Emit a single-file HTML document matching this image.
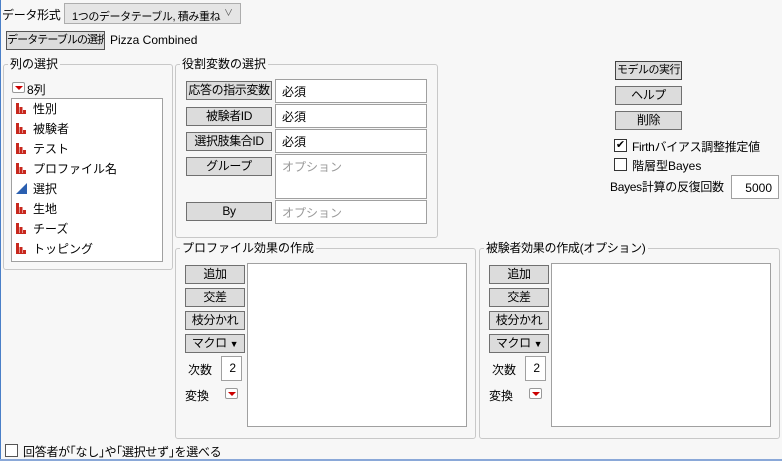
<!DOCTYPE html>
<html><head><meta charset="utf-8"><style>
*{box-sizing:border-box;margin:0;padding:0}
body{width:782px;height:461px;background:#f7f7f7;font-family:"Liberation Sans","Noto Sans CJK JP",sans-serif;font-size:12px;color:#000;position:relative;overflow:hidden}
.a{position:absolute;white-space:nowrap}
.btn{position:absolute;background:#dcdcdc;border:1px solid #707070;text-align:center;font-size:12px;line-height:16px;white-space:nowrap;overflow:hidden;letter-spacing:-0.4px}
.grp{position:absolute;border:1px solid #c8c8c8;border-radius:3px}
.gt{position:absolute;background:#f7f7f7;padding:0 2px;font-size:12px;line-height:14px;white-space:nowrap}
.box{position:absolute;background:#fff;border:1px solid #a0a0a0}
.tf{position:absolute;background:#fff;border:1px solid #a0a0a0;padding:5px 0 0 6px;font-size:12px;line-height:14px}
.gray{color:#999}
.it{position:absolute;font-size:12px;line-height:14px;white-space:nowrap}
.cb{position:absolute;width:13px;height:13px;background:#fff;border:1px solid #333}
.tri{position:absolute;width:13px;height:11px;border:1px solid #999;border-radius:2px;background:#fff}
.tri:after{content:"";position:absolute;left:2px;top:3px;border-left:4px solid transparent;border-right:4px solid transparent;border-top:4px solid #c00}
</style></head><body>
<div class="a" style="left:0;top:0;width:1px;height:461px;background:#4a7fc8"></div>
<div class="a" style="left:0;top:459px;width:782px;height:2px;background:#8aa8d8"></div>

<div class="a" style="left:2px;top:6px;font-size:12px;letter-spacing:-0.3px">データ形式</div>
<div class="a" style="left:64px;top:3px;width:177px;height:21px;border:1px solid #adadad;background:#e5e5e5;padding:4px 0 0 7px;font-size:11px;letter-spacing:-0.4px">1つのデータテーブル, 積み重ね</div>
<div class="a" style="left:224px;top:6px;font-size:9px;color:#555">&#8744;</div>
<div class="btn" style="left:6px;top:31px;width:99px;height:19px;border-color:#555;font-size:11px;letter-spacing:-0.9px;padding:0">データテーブルの選択</div>
<div class="a" style="left:110px;top:33px">Pizza Combined</div>

<div class="grp" style="left:3px;top:64px;width:170px;height:206px"></div>
<div class="gt" style="left:8px;top:57px">列の選択</div>
<div class="tri" style="left:12px;top:82px"></div>
<div class="a" style="left:27px;top:81px">8列</div>
<div class="box" style="left:11px;top:98px;width:152px;height:164px"></div>
<svg class="a" style="left:0;top:0" width="40" height="270">
<defs><g id="b" fill="#c8281e"><rect x="0" y="0" width="3" height="11"/><rect x="3.5" y="4" width="3" height="7"/><rect x="7" y="7" width="3" height="4"/><rect x="0" y="10" width="10" height="1"/></g></defs>
<use href="#b" x="16" y="103"/><use href="#b" x="16" y="123"/><use href="#b" x="16" y="143"/><use href="#b" x="16" y="163"/>
<use href="#b" x="16" y="203"/><use href="#b" x="16" y="223"/><use href="#b" x="16" y="243"/>
<polygon points="16,194 27,183 27,194" fill="#2a5fb0"/>
</svg>
<div class="it" style="left:33px;top:102px">性別</div>
<div class="it" style="left:33px;top:122px">被験者</div>
<div class="it" style="left:33px;top:142px">テスト</div>
<div class="it" style="left:33px;top:162px">プロファイル名</div>
<div class="it" style="left:33px;top:182px">選択</div>
<div class="it" style="left:33px;top:202px">生地</div>
<div class="it" style="left:33px;top:222px">チーズ</div>
<div class="it" style="left:33px;top:242px">トッピング</div>

<div class="grp" style="left:175px;top:64px;width:263px;height:174px"></div>
<div class="gt" style="left:180px;top:57px">役割変数の選択</div>
<div class="btn" style="left:186px;top:81px;width:86px;height:19px">応答の指示変数</div>
<div class="btn" style="left:186px;top:107px;width:86px;height:19px">被験者ID</div>
<div class="btn" style="left:186px;top:132px;width:86px;height:19px">選択肢集合ID</div>
<div class="btn" style="left:186px;top:157px;width:86px;height:19px">グループ</div>
<div class="btn" style="left:186px;top:202px;width:86px;height:19px">By</div>
<div class="tf" style="left:275px;top:79px;width:152px;height:24px">必須</div>
<div class="tf" style="left:275px;top:104px;width:152px;height:24px">必須</div>
<div class="tf" style="left:275px;top:129px;width:152px;height:24px">必須</div>
<div class="tf gray" style="left:275px;top:154px;width:152px;height:45px">オプション</div>
<div class="tf gray" style="left:275px;top:200px;width:152px;height:24px">オプション</div>

<div class="btn" style="left:615px;top:61px;width:67px;height:19px;border-color:#444;font-size:11px;letter-spacing:-0.5px">モデルの実行</div>
<div class="btn" style="left:615px;top:86px;width:67px;height:19px">ヘルプ</div>
<div class="btn" style="left:615px;top:111px;width:67px;height:19px">削除</div>
<div class="cb" style="left:614px;top:139px;font-size:11px;line-height:11px;text-align:center">&#10004;</div>
<div class="a" style="left:632px;top:138px;letter-spacing:-0.3px">Firthバイアス調整推定値</div>
<div class="cb" style="left:614px;top:158px"></div>
<div class="a" style="left:632px;top:157px">階層型Bayes</div>
<div class="a" style="left:610px;top:178px;letter-spacing:-0.3px">Bayes計算の反復回数</div>
<div class="box" style="left:731px;top:175px;width:48px;height:24px;text-align:right;padding:5px 6px 0 0">5000</div>

<div class="grp" style="left:175px;top:248px;width:301px;height:191px"></div>
<div class="gt" style="left:180px;top:241px">プロファイル効果の作成</div>
<div class="btn" style="left:185px;top:265px;width:60px;height:19px">追加</div>
<div class="btn" style="left:185px;top:288px;width:60px;height:19px">交差</div>
<div class="btn" style="left:185px;top:311px;width:60px;height:19px">枝分かれ</div>
<div class="btn" style="left:185px;top:334px;width:60px;height:19px">マクロ <span style="font-size:9px">&#9660;</span></div>
<div class="a" style="left:188px;top:361px">次数</div>
<div class="box" style="left:221px;top:356px;width:21px;height:25px;text-align:right;padding:4px 5px 0 0">2</div>
<div class="a" style="left:185px;top:387px">変換</div>
<div class="tri" style="left:225px;top:388px"></div>
<div class="box" style="left:247px;top:263px;width:220px;height:164px"></div>

<div class="grp" style="left:479px;top:248px;width:301px;height:191px"></div>
<div class="gt" style="left:484px;top:241px;letter-spacing:-0.3px">被験者効果の作成(オプション)</div>
<div class="btn" style="left:489px;top:265px;width:60px;height:19px">追加</div>
<div class="btn" style="left:489px;top:288px;width:60px;height:19px">交差</div>
<div class="btn" style="left:489px;top:311px;width:60px;height:19px">枝分かれ</div>
<div class="btn" style="left:489px;top:334px;width:60px;height:19px">マクロ <span style="font-size:9px">&#9660;</span></div>
<div class="a" style="left:492px;top:361px">次数</div>
<div class="box" style="left:525px;top:356px;width:21px;height:25px;text-align:right;padding:4px 5px 0 0">2</div>
<div class="a" style="left:489px;top:387px">変換</div>
<div class="tri" style="left:529px;top:388px"></div>
<div class="box" style="left:551px;top:263px;width:220px;height:164px"></div>

<div class="cb" style="left:5px;top:444px;border-color:#555"></div>
<div class="a" style="left:23px;top:443px;letter-spacing:-0.3px">回答者が｢なし｣や｢選択せず｣を選べる</div>
</body></html>
